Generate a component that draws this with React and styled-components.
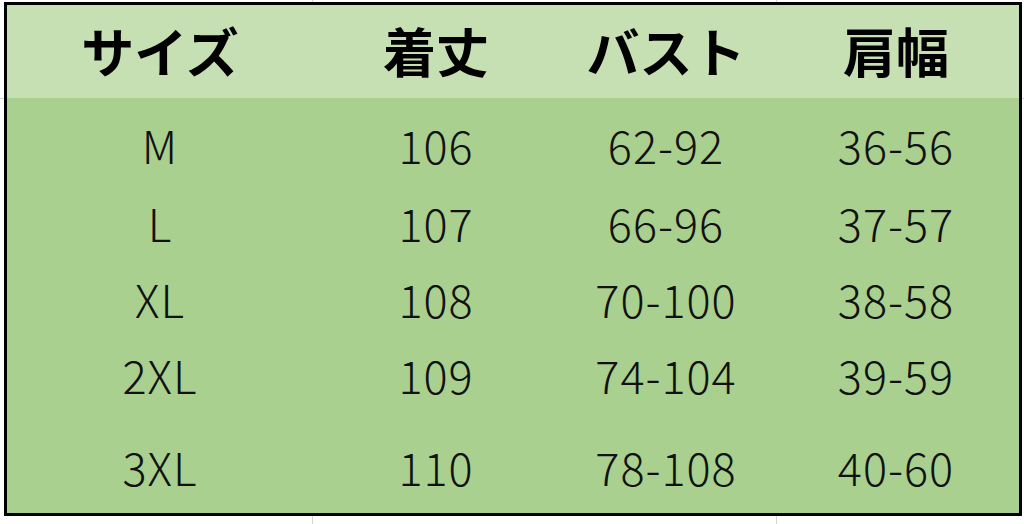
import styled, { createGlobalStyle } from "styled-components";

const GlobalStyle = createGlobalStyle`
  html, body {
    margin: 0;
    padding: 0;
    width: 1024px;
    height: 524px;
    overflow: hidden;
    background-color: #ffffff;
    background-image:
      linear-gradient(#d4d4d4, #d4d4d4),
      linear-gradient(#d4d4d4, #d4d4d4),
      linear-gradient(#d4d4d4, #d4d4d4);
    background-size: 1px 524px, 1px 524px, 1024px 1px;
    background-position: 312px 0, 776px 0, 0 98px;
    background-repeat: no-repeat;
    font-family: "Noto Sans CJK JP", "Noto Sans", sans-serif;
  }
`;

const Table = styled.div`
  box-sizing: border-box;
  margin: 2px 0 0 4px;
  width: 1018px;
  border: 3px solid #000;
  display: grid;
  grid-template-columns: 306px 246px 214px 246px;
`;

const Row = styled.div`
  display: contents;
`;

const Cell = styled.div`
  height: ${(p) => p.$h}px;
  display: flex;
  justify-content: center;
  align-items: ${(p) => (p.$head ? "center" : "flex-end")};
  box-sizing: border-box;
  padding-bottom: ${(p) => (p.$head ? 3 : 24)}px;
  background: ${(p) => (p.$head ? "#c6e0b4" : "#a9d08e")};
  color: ${(p) => (p.$head ? "#000" : "#111")};
  font-size: ${(p) => (p.$head ? 53 : 45)}px;
  font-weight: ${(p) => (p.$head ? 700 : 300)};
  letter-spacing: ${(p) => (p.$head ? 0 : 1)}px;
  line-height: 1;
  white-space: nowrap;
`;

const headers = ["サイズ", "着丈", "バスト", "肩幅"];

const rows = [
  { h: 93, cells: ["M", "106", "62-92", "36-56"] },
  { h: 78, cells: ["L", "107", "66-96", "37-57"] },
  { h: 76, cells: ["XL", "108", "70-100", "38-58"] },
  { h: 76, cells: ["2XL", "109", "74-104", "39-59"] },
  { h: 92, cells: ["3XL", "110", "78-108", "40-60"] },
];

export default function App() {
  return (
    <>
      <GlobalStyle />
      <Table>
        <Row>
          {headers.map((t) => (
            <Cell key={t} $head $h={93}>
              {t}
            </Cell>
          ))}
        </Row>
        {rows.map((r) => (
          <Row key={r.cells[0]}>
            {r.cells.map((c, i) => (
              <Cell key={i} $h={r.h}>
                {c}
              </Cell>
            ))}
          </Row>
        ))}
      </Table>
    </>
  );
}
